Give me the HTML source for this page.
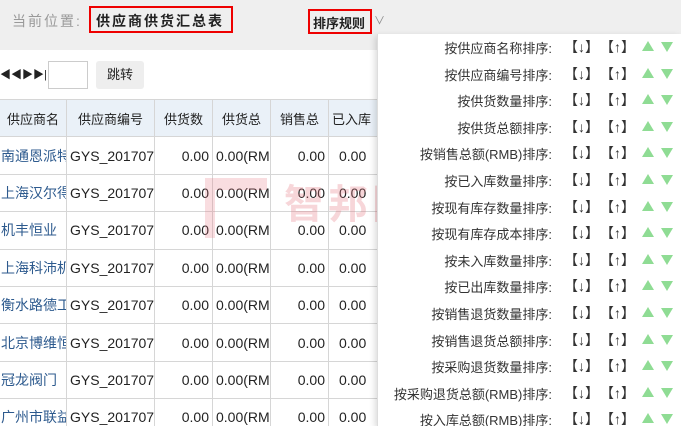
<!DOCTYPE html><html><head><meta charset="utf-8"><style>
*{margin:0;padding:0;box-sizing:border-box}
html,body{width:681px;height:426px;overflow:hidden}
body{background:#fff;font-family:"Liberation Sans","Noto Sans CJK SC",sans-serif;position:relative;font-size:13px;color:#222}
.top{position:absolute;left:0;top:0;width:681px;height:50px;background:#efefef}
.abs{position:absolute;white-space:nowrap}
table{position:absolute;left:-1px;top:99px;border-collapse:collapse;table-layout:fixed;width:380px}
td,th{border:1px solid #d6d6d6;height:37.4px;font-weight:normal;font-size:14px;padding:0 3px;white-space:nowrap;overflow:hidden}
th{background:#eaf1f8;text-align:center;font-size:13px}
td.n{color:#2d5a8e;text-align:left;padding:0 1px}
td.r{text-align:right}
.dd{position:absolute;left:377px;top:34px;width:304px;height:392px;background:#fff;border-left:1px solid #ddd;box-shadow:-2px 2px 6px rgba(0,0,0,.15)}
.row{position:absolute;left:0;width:304px;height:26px;font-size:13px;color:#333}
.row .t{position:absolute;right:130px;top:4px}
.row .a{position:absolute;left:186px;top:3px;font-size:14px}
.row .b{position:absolute;left:222px;top:3px;font-size:14px}
.row .u{position:absolute;left:264px;top:7px;width:0;height:0;border-left:6px solid transparent;border-right:6px solid transparent;border-bottom:10px solid #8fdc94}
.row .d{position:absolute;left:283px;top:8px;width:0;height:0;border-left:6px solid transparent;border-right:6px solid transparent;border-top:10px solid #8fdc94}
</style></head><body>
<div class="top"></div>
<div class="abs" style="left:12px;top:11px;color:#999;font-size:14px;letter-spacing:2px">当前位置:</div>
<div class="abs" style="left:89px;top:6px;width:144px;height:27px;border:2px solid #e00;font-size:14px;font-weight:bold;padding:3px 0 0 5px;letter-spacing:2px">供应商供货汇总表</div>
<div class="abs" style="left:308px;top:9px;width:64px;height:25px;border:2px solid #e00;font-size:13px;font-weight:bold;padding:2px 0 0 3px">排序规则</div>
<div class="abs" style="left:374px;top:12px;color:#888;font-size:11px">∨</div>
<div class="abs" style="left:0;top:66px;font-size:11px;color:#222">◀◀▶▶|</div>
<div class="abs" style="left:48px;top:61px;width:40px;height:28px;border:1px solid #ccc;background:#fff"></div>
<div class="abs" style="left:96px;top:61px;width:48px;height:28px;background:#eee;border-radius:3px;text-align:center;line-height:28px">跳转</div>
<table>
<colgroup><col style="width:67px"><col style="width:88px"><col style="width:58px"><col style="width:58px"><col style="width:58px"><col style="width:51px"></colgroup>
<tr><th>供应商名</th><th>供应商编号</th><th>供货数</th><th>供货总</th><th>销售总</th><th style="text-align:left">已入库</th></tr>
<tr><td class="n">南通恩派特</td><td>GYS_201707</td><td class="r">0.00</td><td>0.00(RM</td><td class="r">0.00</td><td style="padding-left:10px">0.00</td></tr>
<tr><td class="n">上海汉尔得</td><td>GYS_201707</td><td class="r">0.00</td><td>0.00(RM</td><td class="r">0.00</td><td style="padding-left:10px">0.00</td></tr>
<tr><td class="n">机丰恒业（</td><td>GYS_201707</td><td class="r">0.00</td><td>0.00(RM</td><td class="r">0.00</td><td style="padding-left:10px">0.00</td></tr>
<tr><td class="n">上海科沛机</td><td>GYS_201707</td><td class="r">0.00</td><td>0.00(RM</td><td class="r">0.00</td><td style="padding-left:10px">0.00</td></tr>
<tr><td class="n">衡水路德工</td><td>GYS_201707</td><td class="r">0.00</td><td>0.00(RM</td><td class="r">0.00</td><td style="padding-left:10px">0.00</td></tr>
<tr><td class="n">北京博维恒</td><td>GYS_201707</td><td class="r">0.00</td><td>0.00(RM</td><td class="r">0.00</td><td style="padding-left:10px">0.00</td></tr>
<tr><td class="n">冠龙阀门（</td><td>GYS_201707</td><td class="r">0.00</td><td>0.00(RM</td><td class="r">0.00</td><td style="padding-left:10px">0.00</td></tr>
<tr><td class="n">广州市联益</td><td>GYS_201707</td><td class="r">0.00</td><td>0.00(RM</td><td class="r">0.00</td><td style="padding-left:10px">0.00</td></tr>
</table>
<div class="abs" style="left:284px;top:172px;font-size:40px;font-weight:bold;color:rgba(230,120,130,.3);letter-spacing:4px">智邦国际</div>
<div class="abs" style="left:205px;top:178px;width:62px;height:60px;border-top:12px solid rgba(230,120,130,.25);border-left:10px solid rgba(230,120,130,.25)"></div>
<div class="dd">
<div class="row" style="top:0"><span class="t">按供应商名称排序:</span><span class="a">【↓】</span><span class="b">【↑】</span><span class="u"></span><span class="d"></span></div>
<div class="row" style="top:26.6px"><span class="t">按供应商编号排序:</span><span class="a">【↓】</span><span class="b">【↑】</span><span class="u"></span><span class="d"></span></div>
<div class="row" style="top:53.2px"><span class="t">按供货数量排序:</span><span class="a">【↓】</span><span class="b">【↑】</span><span class="u"></span><span class="d"></span></div>
<div class="row" style="top:79.8px"><span class="t">按供货总额排序:</span><span class="a">【↓】</span><span class="b">【↑】</span><span class="u"></span><span class="d"></span></div>
<div class="row" style="top:106.4px"><span class="t">按销售总额(RMB)排序:</span><span class="a">【↓】</span><span class="b">【↑】</span><span class="u"></span><span class="d"></span></div>
<div class="row" style="top:133px"><span class="t">按已入库数量排序:</span><span class="a">【↓】</span><span class="b">【↑】</span><span class="u"></span><span class="d"></span></div>
<div class="row" style="top:159.6px"><span class="t">按现有库存数量排序:</span><span class="a">【↓】</span><span class="b">【↑】</span><span class="u"></span><span class="d"></span></div>
<div class="row" style="top:186.2px"><span class="t">按现有库存成本排序:</span><span class="a">【↓】</span><span class="b">【↑】</span><span class="u"></span><span class="d"></span></div>
<div class="row" style="top:212.8px"><span class="t">按未入库数量排序:</span><span class="a">【↓】</span><span class="b">【↑】</span><span class="u"></span><span class="d"></span></div>
<div class="row" style="top:239.4px"><span class="t">按已出库数量排序:</span><span class="a">【↓】</span><span class="b">【↑】</span><span class="u"></span><span class="d"></span></div>
<div class="row" style="top:266px"><span class="t">按销售退货数量排序:</span><span class="a">【↓】</span><span class="b">【↑】</span><span class="u"></span><span class="d"></span></div>
<div class="row" style="top:292.6px"><span class="t">按销售退货总额排序:</span><span class="a">【↓】</span><span class="b">【↑】</span><span class="u"></span><span class="d"></span></div>
<div class="row" style="top:319.2px"><span class="t">按采购退货数量排序:</span><span class="a">【↓】</span><span class="b">【↑】</span><span class="u"></span><span class="d"></span></div>
<div class="row" style="top:345.8px"><span class="t">按采购退货总额(RMB)排序:</span><span class="a">【↓】</span><span class="b">【↑】</span><span class="u"></span><span class="d"></span></div>
<div class="row" style="top:372.4px"><span class="t">按入库总额(RMB)排序:</span><span class="a">【↓】</span><span class="b">【↑】</span><span class="u"></span><span class="d"></span></div>
</div>
</body></html>
